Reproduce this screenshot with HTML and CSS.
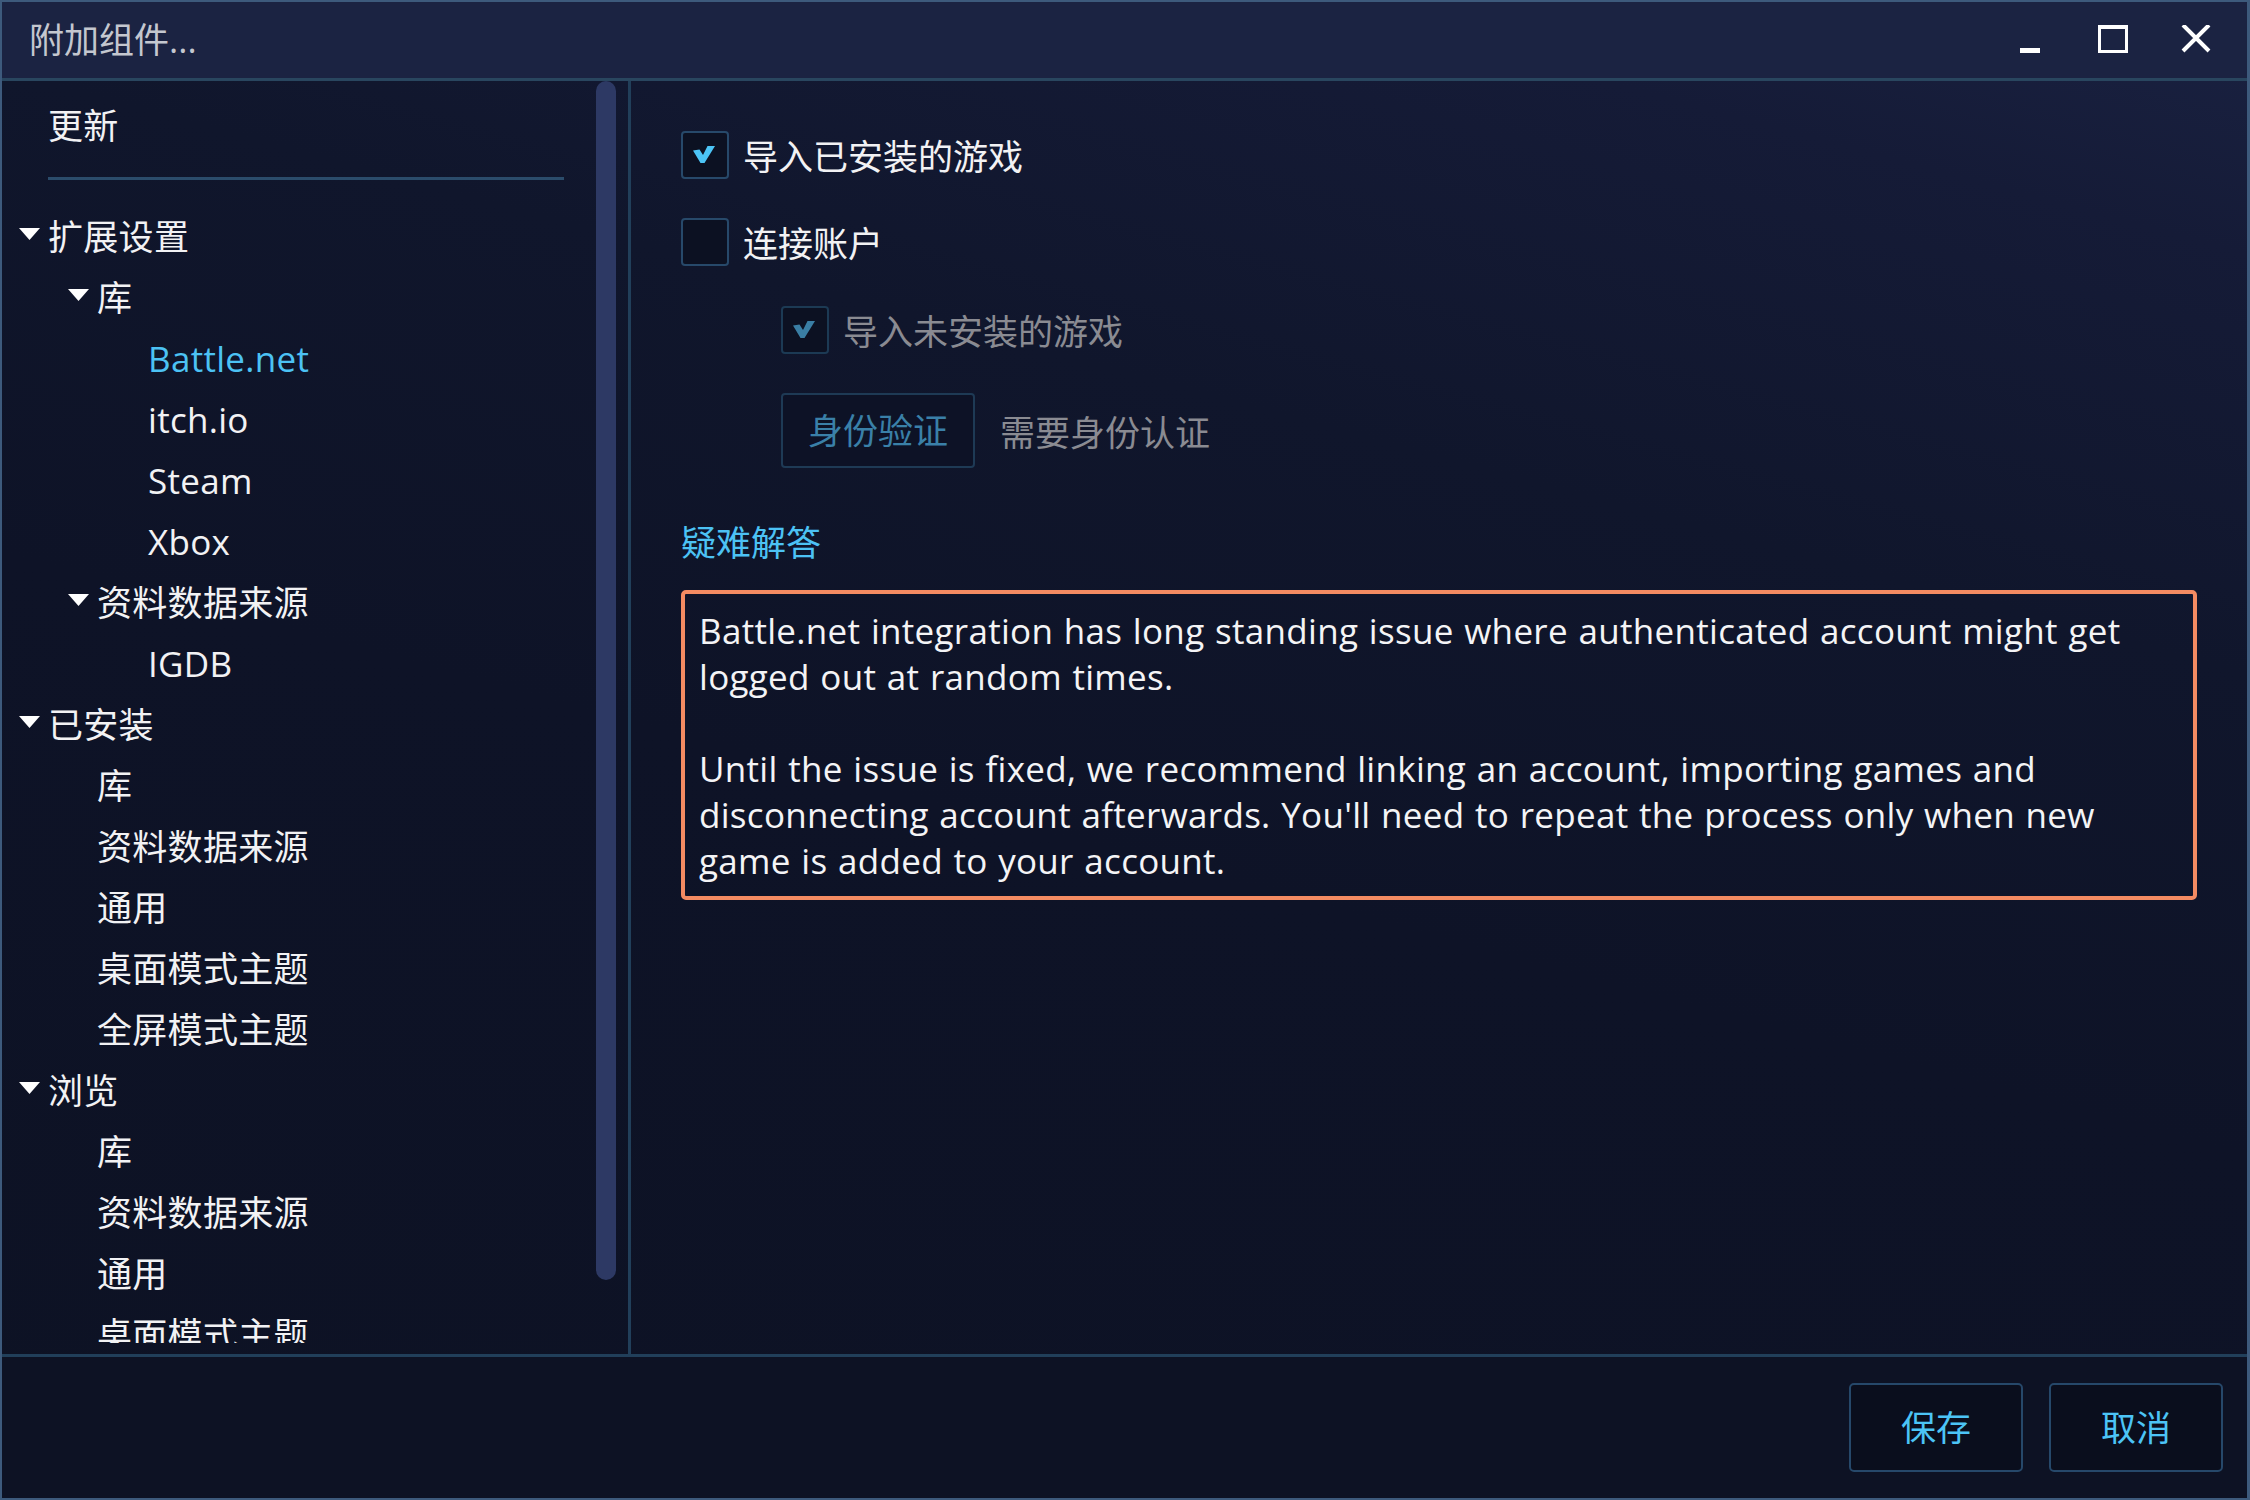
FILE: index.html
```
<!DOCTYPE html>
<html lang="zh-CN">
<head>
<meta charset="utf-8">
<title>附加组件...</title>
<link rel="stylesheet" href="styles.css">
</head>
<body>
<div class="window">
  <div class="titlebar">
    <div class="title">附加组件...</div>
    <div class="controls">
      <div class="ctl"><svg width="30" height="30" viewBox="0 0 30 30"><rect x="5" y="23" width="20" height="5" fill="#fff"/></svg></div>
      <div class="ctl"><svg width="30" height="30" viewBox="0 0 30 30"><rect x="1.5" y="1.5" width="27" height="25" fill="none" stroke="#fff" stroke-width="3"/><rect x="0" y="0" width="30" height="4" fill="#fff"/></svg></div>
      <div class="ctl"><svg width="30" height="30" viewBox="0 0 30 30"><path d="M2 0 L28 26 M28 0 L2 26" stroke="#fff" stroke-width="4" fill="none"/></svg></div>
    </div>
  </div>

  <div class="content">
    <div class="sidebar">
      <div class="tree">
        <div class="row l0"><span class="exp"></span>更新</div>
        <div class="rule"></div>
        <div class="row l0"><span class="exp"><svg class="tri" width="21" height="12" viewBox="0 0 21 12"><path d="M0 0 H21 L10.5 12 Z" fill="#fff"/></svg></span>扩展设置</div>
        <div class="row l1"><span class="exp"><svg class="tri" width="21" height="12" viewBox="0 0 21 12"><path d="M0 0 H21 L10.5 12 Z" fill="#fff"/></svg></span>库</div>
        <div class="row l2 selected"><span class="exp"></span>Battle.net</div>
        <div class="row l2"><span class="exp"></span>itch.io</div>
        <div class="row l2"><span class="exp"></span>Steam</div>
        <div class="row l2"><span class="exp"></span>Xbox</div>
        <div class="row l1"><span class="exp"><svg class="tri" width="21" height="12" viewBox="0 0 21 12"><path d="M0 0 H21 L10.5 12 Z" fill="#fff"/></svg></span>资料数据来源</div>
        <div class="row l2"><span class="exp"></span>IGDB</div>
        <div class="row l0"><span class="exp"><svg class="tri" width="21" height="12" viewBox="0 0 21 12"><path d="M0 0 H21 L10.5 12 Z" fill="#fff"/></svg></span>已安装</div>
        <div class="row l1"><span class="exp"></span>库</div>
        <div class="row l1"><span class="exp"></span>资料数据来源</div>
        <div class="row l1"><span class="exp"></span>通用</div>
        <div class="row l1"><span class="exp"></span>桌面模式主题</div>
        <div class="row l1"><span class="exp"></span>全屏模式主题</div>
        <div class="row l0"><span class="exp"><svg class="tri" width="21" height="12" viewBox="0 0 21 12"><path d="M0 0 H21 L10.5 12 Z" fill="#fff"/></svg></span>浏览</div>
        <div class="row l1"><span class="exp"></span>库</div>
        <div class="row l1"><span class="exp"></span>资料数据来源</div>
        <div class="row l1"><span class="exp"></span>通用</div>
        <div class="row l1"><span class="exp"></span>桌面模式主题</div>
      </div>
      <div class="scrolltrack"><div class="thumb"></div></div>
    </div>
    <div class="vdivider"></div>
    <div class="main">
      <div class="option">
        <span class="check on"><svg width="22" height="17" viewBox="0 0 22 17"><path d="M0 4.5 L6.5 3.5 L10 9 L14.5 0 L22 0 L11.5 17 L7.5 17 Z" fill="#4cc4f6"/></svg></span>
        <span class="label">导入已安装的游戏</span>
      </div>
      <div class="option gap">
        <span class="check"></span>
        <span class="label">连接账户</span>
      </div>
      <div class="option gap sub disabled">
        <span class="check on"><svg width="22" height="17" viewBox="0 0 22 17"><path d="M0 4.5 L6.5 3.5 L10 9 L14.5 0 L22 0 L11.5 17 L7.5 17 Z" fill="#3a7ea4"/></svg></span>
        <span class="label">导入未安装的游戏</span>
      </div>
      <div class="authrow">
        <button class="btn-auth">身份验证</button>
        <span class="authnote">需要身份认证</span>
      </div>
      <div class="section">疑难解答</div>
      <div class="notice">
        <p>Battle.net integration has long standing issue where authenticated account might get<br>logged out at random times.</p>
        <p>Until the issue is fixed, we recommend linking an account, importing games and<br>disconnecting account afterwards. You'll need to repeat the process only when new<br>game is added to your account.</p>
      </div>
    </div>
  </div>

  <div class="footer">
    <button class="btn">保存</button>
    <button class="btn">取消</button>
  </div>
</div>
</body>
</html>
```

FILE: styles.css
```
html, body {
  margin: 0;
  padding: 0;
  width: 2250px;
  height: 1500px;
  background: #0d1224;
  overflow: hidden;
}

.window {
  box-sizing: border-box;
  width: 2250px;
  height: 1500px;
  border: 2px solid #3d5a7c;
  border-right-width: 3px;
  display: flex;
  flex-direction: column;
  background: linear-gradient(195deg, #1a2242 0%, #151b37 12%, #10162c 32%, #0e1327 55%, #0d1224 100%);
  font-family: "Open Sans", "Noto Sans CJK SC", sans-serif;
  font-size: 35px;
  color: #f2f2f4;
}

/* title bar */
.titlebar {
  height: 76px;
  flex: none;
  display: flex;
  align-items: center;
  padding-left: 27px;
  border-bottom: 3px solid #29465f;
  background: #1b2342;
}
.title {
  color: #c4c7cf;
  line-height: 46px;
}
.controls {
  margin-left: auto;
  display: flex;
  padding-right: 10px;
}
.ctl {
  width: 83px;
  height: 76px;
  display: flex;
  align-items: center;
  justify-content: center;
}
.ctl svg { display: block; }

/* body */
.content {
  flex: 1;
  min-height: 0;
  display: flex;
}

.sidebar {
  width: 626px;
  flex: none;
  display: flex;
}
.tree {
  flex: 1;
  min-width: 0;
  overflow: hidden;
  padding-top: 14px;
  margin-bottom: 11px;
}
.row {
  height: 61px;
  line-height: 61px;
  display: flex;
  align-items: center;
  white-space: nowrap;
  letter-spacing: 0.3px;
}
.row.l0 { padding-left: 17px; }
.row.l1 { padding-left: 66px; }
.row.l2 { padding-left: 117px; }
.row.selected { color: #4cc2f4; }
.exp {
  width: 29px;
  flex: none;
  display: flex;
  align-items: center;
}
.tri {
  display: block;
  margin-bottom: 5px;
}
.rule {
  height: 3px;
  width: 516px;
  margin: 21px 0 26px 46px;
  background: #2b4c6b;
}

.scrolltrack {
  width: 20px;
  flex: none;
  margin-right: 12px;
}
.thumb {
  height: 1199px;
  border-radius: 10px;
  background: #2d3964;
}

.vdivider {
  width: 3px;
  flex: none;
  background: #213f5a;
}

/* main pane */
.main {
  flex: 1;
  min-width: 0;
  padding: 50px 50px 0 50px;
}
.option {
  display: flex;
  align-items: center;
  gap: 14px;
  height: 48px;
}
.option.gap { margin-top: 39px; }
.option.sub { margin-left: 100px; margin-top: 40px; }
.check {
  box-sizing: border-box;
  width: 48px;
  height: 48px;
  flex: none;
  border: 2px solid #27496a;
  border-radius: 4px;
  background: #0c1122;
  display: flex;
  align-items: flex-start;
  justify-content: center;
  padding-top: 13px;
  padding-right: 2px;
}
.check svg { display: block; }
.label {
  line-height: 48px;
  padding-top: 4px;
}
.option.disabled .check { border-color: #1c3a54; }
.option.disabled .label { color: #8a8b92; }

.authrow {
  display: flex;
  align-items: center;
  gap: 25px;
  margin: 39px 0 0 100px;
}
.btn-auth {
  box-sizing: border-box;
  height: 75px;
  padding: 0 25px;
  border: 2px solid #1e3a55;
  border-radius: 4px;
  background: #0d1226;
  color: #3a80a8;
  font: inherit;
  line-height: 46px;
}
.authnote { color: #8a8b92; }

.section {
  margin-top: 52px;
  line-height: 46px;
  color: #4cc2f4;
}

.notice {
  margin-top: 24px;
  border: 4px solid #f48b62;
  border-radius: 5px;
  padding: 14px 15px 12px 14px;
  line-height: 46px;
  color: #f4f4f6;
  white-space: nowrap;
  letter-spacing: 0.3px;
  word-spacing: 1.2px;
}
.notice p { margin: 0; }
.notice p + p { margin-top: 46px; }

/* footer */
.footer {
  height: 141px;
  flex: none;
  border-top: 3px solid #213f5a;
  display: flex;
  align-items: center;
  justify-content: flex-end;
  gap: 26px;
  padding-right: 24px;
  background: #0d1224;
}
.btn {
  box-sizing: border-box;
  width: 174px;
  height: 89px;
  border: 2px solid #26486a;
  border-radius: 5px;
  background: #0a0e1d;
  color: #4cc4f6;
  font: inherit;
  line-height: 46px;
}
```
